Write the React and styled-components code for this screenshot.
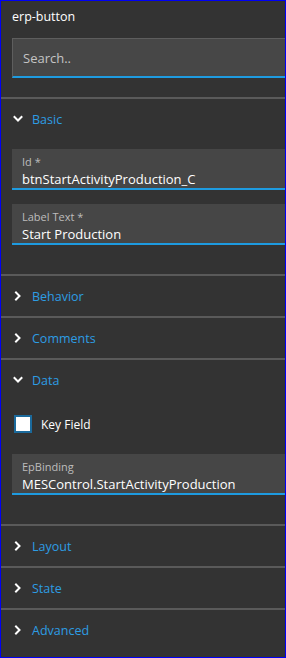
import React, { useState } from "react";
import styled, { createGlobalStyle } from "styled-components";

const GlobalStyle = createGlobalStyle`
  body {
    margin: 0;
    background: #ffffff;
    font-family: "Open Sans", "Noto Sans", sans-serif;
  }
  * { box-sizing: border-box; }
`;

const sections = [
  {
    title: "Basic",
    open: true,
    fields: [
      { label: "Id *", value: "btnStartActivityProduction_C" },
      { label: "Label Text *", value: "Start Production" },
    ],
  },
  { title: "Behavior" },
  { title: "Comments" },
  {
    title: "Data",
    open: true,
    checkbox: "Key Field",
    fields: [{ label: "EpBinding", value: "MESControl.StartActivityProduction" }],
  },
  { title: "Layout" },
  { title: "State" },
  { title: "Advanced" },
];

function Chevron({ open }) {
  return (
    <ChevronIcon width="10" height="10" viewBox="0 0 10 10">
      {open ? (
        <path d="M1.5 3 L5 6.5 L8.5 3" />
      ) : (
        <path d="M3 1.5 L6.5 5 L3 8.5" />
      )}
    </ChevronIcon>
  );
}

export default function App() {
  const [query, setQuery] = useState("");

  return (
    <>
      <GlobalStyle />
      <Panel>
        <Title>erp-button</Title>
        <SearchInput
          value={query}
          onChange={(e) => setQuery(e.target.value)}
          placeholder="Search.."
        />
        <SearchGap />
        {sections.map((s) => (
          <Section key={s.title}>
            <SectionHeader>
              <Chevron open={s.open} />
              <SectionTitle>{s.title}</SectionTitle>
            </SectionHeader>
            {s.open && (
              <SectionBody>
                {s.checkbox && (
                  <CheckRow>
                    <CheckBox />
                    <CheckLabel>{s.checkbox}</CheckLabel>
                  </CheckRow>
                )}
                {s.fields.map((f) => (
                  <Field key={f.label}>
                    <FieldLabel>{f.label}</FieldLabel>
                    <FieldValue>{f.value}</FieldValue>
                  </Field>
                ))}
              </SectionBody>
            )}
          </Section>
        ))}
      </Panel>
    </>
  );
}

const Panel = styled.div`
  width: 286px;
  height: 658px;
  border: 1px solid #0000f5;
  background: #333333;
  overflow: hidden;
  display: flex;
  flex-direction: column;
`;

const Title = styled.div`
  height: 37px;
  padding: 6px 0 0 11px;
  color: #ffffff;
  font-size: 12.5px;
  line-height: 20px;
`;

const SearchInput = styled.input`
  flex: none;
  margin-left: 11px;
  width: 290px;
  height: 40px;
  padding: 0 0 0 10px;
  border: none;
  border-top: 1px solid #5e5e5e;
  border-left: 1px solid #5e5e5e;
  border-bottom: 2px solid #1e9be0;
  background: #474747;
  color: #ffffff;
  font: inherit;
  font-size: 13px;
  outline: none;

  &::placeholder {
    color: #c4c4c4;
  }
`;

const SearchGap = styled.div`
  height: 19px;
  flex: none;
`;

const Section = styled.div`
  flex: none;
  border-top: 2px solid #5a5a5a;
`;

const SectionHeader = styled.div`
  height: 40px;
  display: flex;
  align-items: center;
  padding-left: 12px;
  gap: 9px;
`;

const ChevronIcon = styled.svg`
  fill: none;
  stroke: #ffffff;
  stroke-width: 2;
  stroke-linecap: square;
`;

const SectionTitle = styled.span`
  color: #2d9de3;
  font-size: 12.5px;
`;

const SectionBody = styled.div`
  display: flex;
  flex-direction: column;
  gap: 14px;
  padding: 10px 0 29px 11px;
`;

const CheckRow = styled.div`
  display: flex;
  align-items: center;
  gap: 9px;
  padding: 5px 0 7px 2px;
`;

const CheckBox = styled.span`
  width: 18px;
  height: 18px;
  background: #ffffff;
  border: 2px solid #1b6a9c;
`;

const CheckLabel = styled.span`
  color: #ffffff;
  font-size: 12px;
`;

const Field = styled.div`
  width: 290px;
  height: 41px;
  padding: 5px 0 0 10px;
  background: #464646;
  border-bottom: 2px solid #1e9be0;
`;

const FieldLabel = styled.div`
  color: #bdbdbd;
  font-size: 11px;
  line-height: 16px;
`;

const FieldValue = styled.div`
  color: #ffffff;
  font-size: 13px;
  line-height: 18px;
  white-space: nowrap;
`;
